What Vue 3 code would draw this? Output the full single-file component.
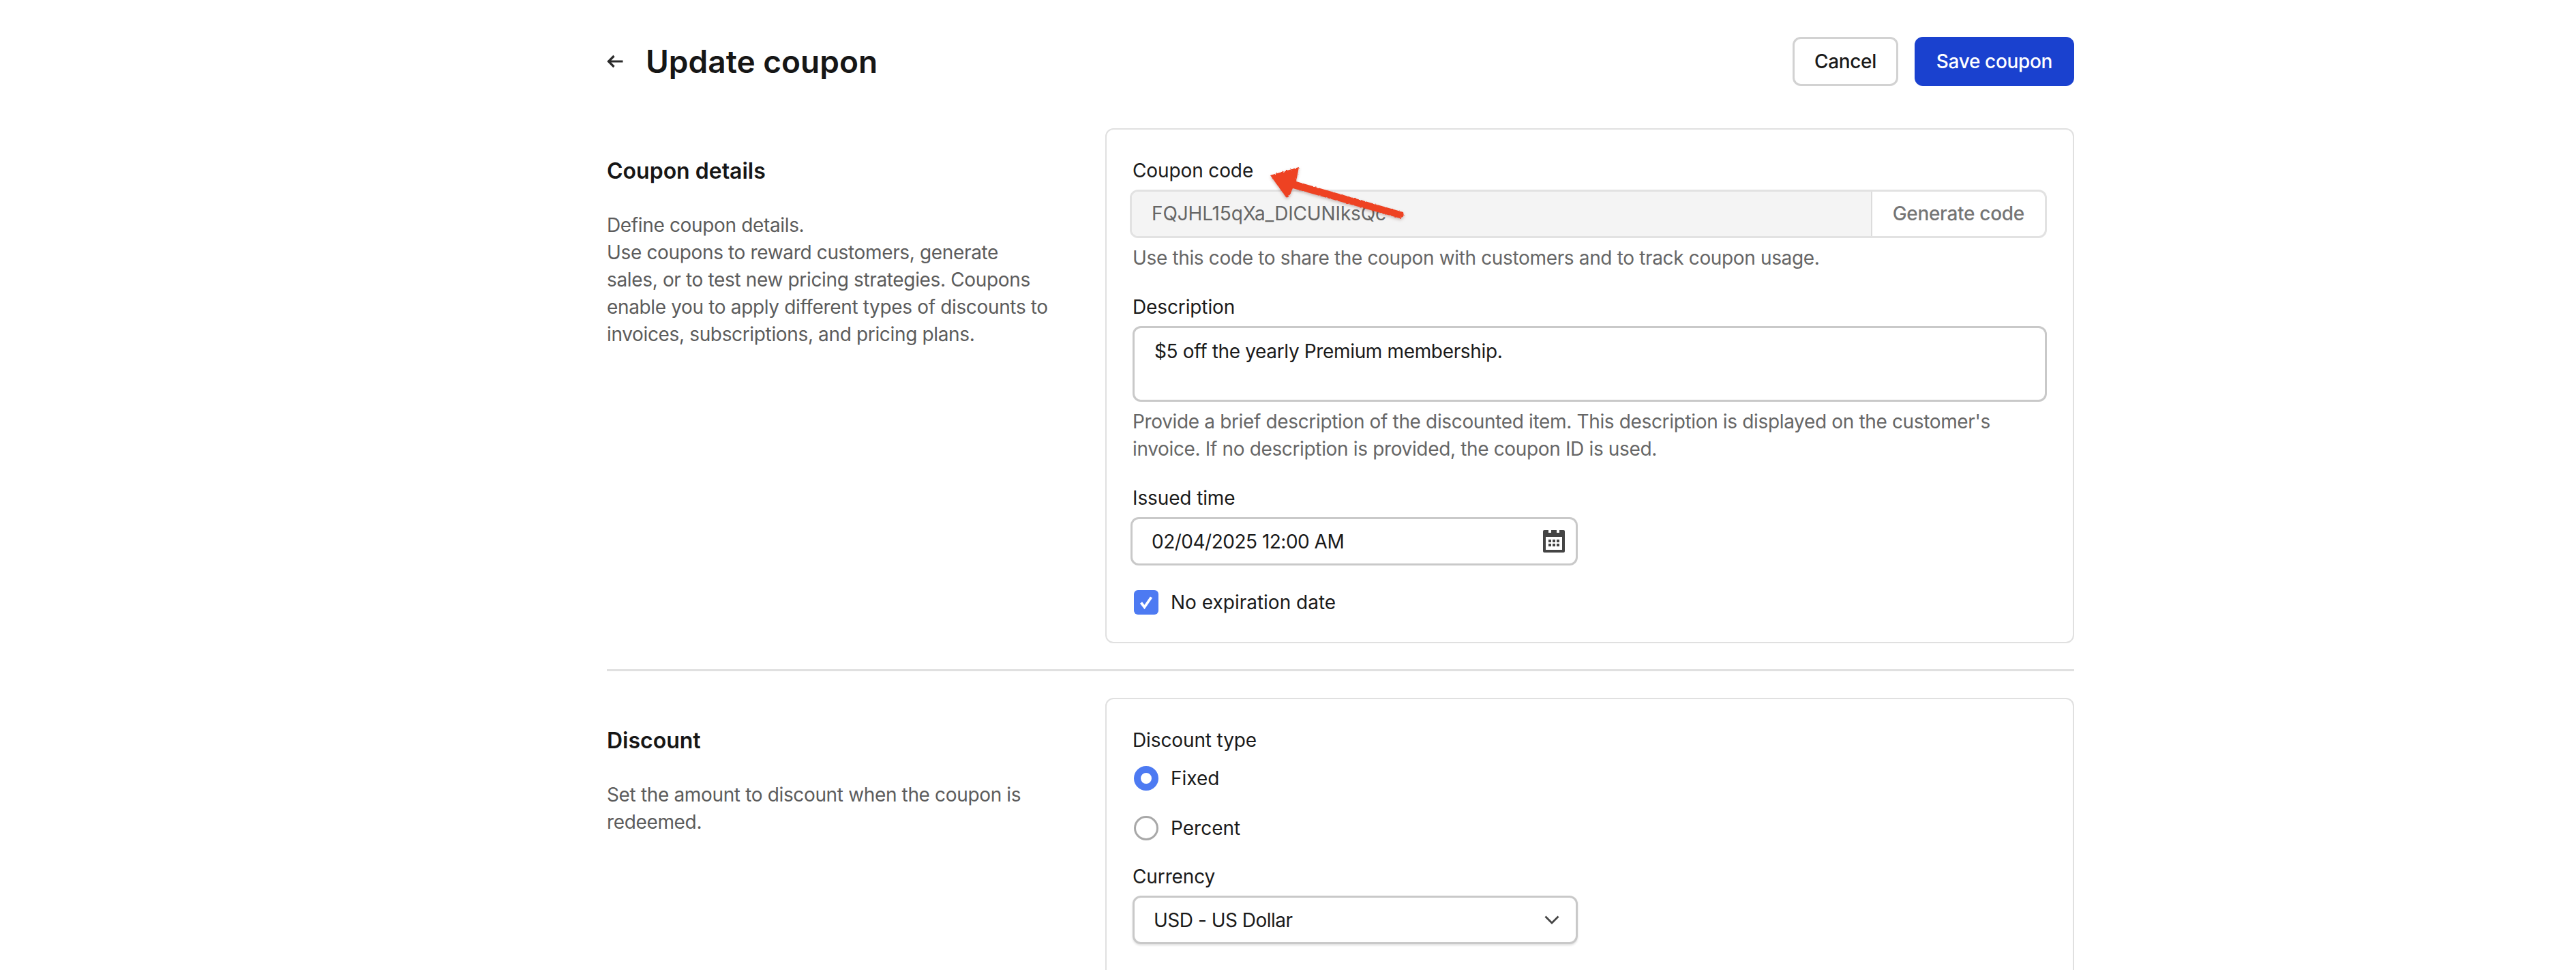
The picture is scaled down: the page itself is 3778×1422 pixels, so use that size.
<template>
  <div class="page">
    <header class="top">
      <div class="title-wrap">
        <svg class="back" viewBox="0 0 24 20" width="24" height="20" aria-hidden="true">
          <path d="M23.5 10H2.5M10.5 2 2.5 10l8 8" fill="none" stroke="#2b2b2b" stroke-width="3.2" />
        </svg>
        <h1>Update coupon</h1>
      </div>
      <div class="actions">
        <button class="btn" type="button">Cancel</button>
        <button class="btn primary" type="button">Save coupon</button>
      </div>
    </header>

    <section class="section">
      <div class="intro">
        <h2>Coupon details</h2>
        <p>
          Define coupon details.<br />
          Use coupons to reward customers, generate sales, or to test new pricing strategies. Coupons enable you to apply different types of discounts to invoices, subscriptions, and pricing plans.
        </p>
      </div>
      <div class="card">
        <div class="label">Coupon code</div>
        <div class="code-field">
          <div class="code-value">{{ couponCode }}</div>
          <div class="code-btn">Generate code</div>
        </div>
        <div class="help">Use this code to share the coupon with customers and to track coupon usage.</div>

        <div class="label gap-top">Description</div>
        <div class="textarea">$5 off the yearly Premium membership.</div>
        <div class="help">
          Provide a brief description of the discounted item. This description is displayed on the customer's invoice. If no description is provided, the coupon ID is used.
        </div>

        <div class="label gap-top-sm">Issued time</div>
        <div class="control date">
          <span>02/04/2025 12:00 AM</span>
          <svg viewBox="0 0 32 33" width="32" height="33" aria-hidden="true">
            <path fill="#444" fill-rule="evenodd" d="M2 0h6v4h4V0h8v4h4V0h6a2 2 0 0 1 2 2v29a2 2 0 0 1-2 2H2a2 2 0 0 1-2-2V2a2 2 0 0 1 2-2Zm2 10v19h24V10Z" />
            <path fill="#444" d="M8 14h4v4H8zM14 14h4v4h-4zM20 14h4v4h-4zM8 20h4v4H8zM14 20h4v4h-4zM20 20h4v4h-4z" />
          </svg>
        </div>

        <div class="option check-row">
          <span class="checkbox">
            <svg viewBox="0 0 36 36" width="36" height="36" aria-hidden="true">
              <path d="M10.5 18.5 15.5 25 25.5 10.5" fill="none" stroke="#fff" stroke-width="3.8" />
            </svg>
          </span>
          No expiration date
        </div>
      </div>
    </section>

    <hr class="divider" />

    <section class="section">
      <div class="intro">
        <h2>Discount</h2>
        <p>Set the amount to discount when the coupon is redeemed.</p>
      </div>
      <div class="card discount-card">
        <div class="label">Discount type</div>
        <div
          v-for="opt in discountTypes"
          :key="opt.name"
          class="option radio-row"
        >
          <span :class="['radio', { on: opt.selected }]"></span>
          {{ opt.name }}
        </div>

        <div class="label currency">Currency</div>
        <div class="control select">
          <span>USD - US Dollar</span>
          <svg viewBox="0 0 22 13" width="22" height="13" aria-hidden="true">
            <path d="M1.5 1.5 11 11l9.5-9.5" fill="none" stroke="#444" stroke-width="2.8" />
          </svg>
        </div>
      </div>
    </section>

    <!-- annotation drawn over the form -->
    <svg class="pointer" viewBox="0 0 210 80" width="210" height="80" aria-hidden="true">
      <defs>
        <filter id="rough" x="-5%" y="-10%" width="110%" height="120%">
          <feTurbulence type="fractalNoise" baseFrequency="0.35" numOctaves="2" seed="4" />
          <feDisplacementMap in="SourceGraphic" scale="3" />
        </filter>
      </defs>
      <path
        fill="#ee4224"
        filter="url(#rough)"
        d="M3 14 45 2 41 23 198 68 199 74 193 77 36 33 30 46 26 46Z"
      />
    </svg>
  </div>
</template>

<script setup>
const couponCode = 'FQJHL15qXa_DICUNIksQc'

const discountTypes = [
  { name: 'Fixed', selected: true },
  { name: 'Percent', selected: false },
]
</script>

<style>
html,
body {
  margin: 0;
  background: #fff;
  overflow: hidden;
}
</style>

<style scoped>
.page {
  position: relative;
  box-sizing: border-box;
  width: 3042px;
  height: 1422px;
  padding: 54px 0 0 890px;
  overflow: hidden;
  font-family: Inter, "Liberation Sans", sans-serif;
  font-size: 28px;
  line-height: 40px;
  color: #1a1a1a;
}
.top {
  display: flex;
  align-items: center;
  justify-content: space-between;
  height: 72px;
  margin-bottom: 62px;
}
.title-wrap {
  display: flex;
  align-items: center;
  gap: 33px;
}
h1 {
  margin: 0;
  font-size: 46px;
  line-height: 56px;
  font-weight: 600;
  color: #161616;
}
.actions {
  display: flex;
  gap: 24px;
}
.btn {
  box-sizing: border-box;
  height: 72px;
  padding: 0 29px;
  border: 3px solid #d2d2d2;
  border-radius: 12px;
  background: #fff;
  color: #1a1a1a;
  font: 500 28px/40px Inter, "Liberation Sans", sans-serif;
  letter-spacing: -0.35px;
}
.btn.primary {
  padding: 0 32px;
  border: 0;
  background: #1a41cf;
  color: #fff;
}
.section {
  display: grid;
  grid-template-columns: 731px 1421px;
}
.intro {
  padding-top: 43px;
}
h2 {
  margin: 0 0 39px;
  font-size: 32px;
  line-height: 40px;
  font-weight: 600;
  color: #161616;
}
.intro p {
  width: 652px;
  margin: 0;
  color: #5c5c5c;
  letter-spacing: -0.35px;
}
.card {
  box-sizing: border-box;
  padding: 40px 38px 38px;
  border: 2px solid #e0e0e0;
  border-radius: 12px;
  background: #fff;
}
.discount-card {
  padding-bottom: 160px;
}
.label {
  margin-bottom: 8px;
  letter-spacing: -0.12px;
}
.gap-top {
  margin-top: 32px;
}
.gap-top-sm {
  margin-top: 32px;
}
.code-field {
  display: flex;
  box-sizing: border-box;
  height: 71px;
  margin-left: -4px;
  border: 3px solid #e2e2e2;
  border-radius: 12px;
  overflow: hidden;
}
.code-value {
  flex: 1;
  padding: 0 29px;
  background: #f4f4f4;
  color: #666;
  line-height: 65px;
  letter-spacing: -0.15px;
}
.code-btn {
  padding: 0 30px;
  border-left: 2px solid #dcdcdc;
  color: #757575;
  font-weight: 500;
  line-height: 65px;
  letter-spacing: -0.3px;
}
.help {
  margin-top: 9px;
  color: #666;
  letter-spacing: -0.35px;
}
.textarea {
  box-sizing: border-box;
  height: 111px;
  padding: 14px 29px;
  border: 3px solid #c9c9c9;
  border-radius: 12px;
  letter-spacing: -0.35px;
}
.control {
  display: flex;
  align-items: center;
  justify-content: space-between;
  box-sizing: border-box;
  width: 653px;
  height: 71px;
  padding: 0 24px 0 28px;
  border: 3px solid #c9c9c9;
  border-radius: 12px;
  background: #fff;
  letter-spacing: -0.5px;
}
.date {
  width: 656px;
  margin-left: -3px;
  padding-right: 16px;
}
.select {
  box-shadow: 0 2px 3px rgba(0, 0, 0, 0.12);
}
.option {
  display: flex;
  align-items: center;
  gap: 18px;
  margin-left: 2px;
}
.check-row {
  margin-top: 34px;
}
.checkbox {
  width: 36px;
  height: 36px;
  border-radius: 6px;
  background: #4d7af2;
}
.checkbox svg {
  display: block;
}
.radio-row {
  margin-top: 16px;
}
.radio-row + .radio-row {
  margin-top: 33px;
}
.radio {
  box-sizing: border-box;
  width: 36px;
  height: 36px;
  border: 3px solid #a8a8a8;
  border-radius: 50%;
  background: #fff;
}
.radio.on {
  border: 10px solid #4d7af2;
}
.currency {
  margin-top: 31px;
}
.divider {
  height: 3px;
  margin: 38px 0 39px;
  border: 0;
  background: #e0e0e0;
}
.pointer {
  position: absolute;
  left: 1860px;
  top: 243px;
  filter: drop-shadow(0 2px 2px rgba(90, 30, 20, 0.3));
}
</style>
